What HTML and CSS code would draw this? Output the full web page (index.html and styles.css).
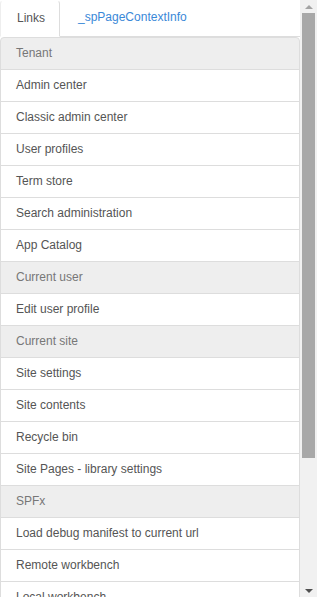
FILE: index.html
```html
<!DOCTYPE html>
<html>
<head>
<meta charset="utf-8">
<link rel="stylesheet" href="styles.css">
</head>
<body>
<div class="frame">
  <div class="panel">
    <div class="tabs">
      <div class="tab active">Links</div>
      <div class="tab link">_spPageContextInfo</div>
    </div>
    <div class="list">
      <div class="item head first">Tenant</div>
      <div class="item">Admin center</div>
      <div class="item">Classic admin center</div>
      <div class="item">User profiles</div>
      <div class="item">Term store</div>
      <div class="item">Search administration</div>
      <div class="item">App Catalog</div>
      <div class="item head">Current user</div>
      <div class="item">Edit user profile</div>
      <div class="item head">Current site</div>
      <div class="item">Site settings</div>
      <div class="item">Site contents</div>
      <div class="item">Recycle bin</div>
      <div class="item">Site Pages - library settings</div>
      <div class="item head">SPFx</div>
      <div class="item">Load debug manifest to current url</div>
      <div class="item">Remote workbench</div>
      <div class="item">Local workbench</div>
    </div>
  </div>
  <div class="scrollbar">
    <div class="arrow up"></div>
    <div class="track"><div class="thumb"></div></div>
    <div class="arrow down"></div>
  </div>
</div>
</body>
</html>
```
FILE: styles.css
```css
html, body {
  margin: 0;
  padding: 0;
  overflow: hidden;
  background: #fff;
}
body {
  font-family: "Liberation Sans", Arial, sans-serif;
  font-size: 12px;
  color: #555;
}
.frame {
  display: flex;
  width: 317px;
  height: 597px;
  overflow: hidden;
}
.panel {
  width: 300px;
  flex: none;
  overflow: hidden;
}
.tabs {
  display: flex;
  height: 37px;
  border-bottom: 1px solid #ddd;
  box-sizing: border-box;
}
.tab {
  padding: 0 16px;
  line-height: 34px;
  height: 37px;
  box-sizing: border-box;
}
.tab.active {
  width: 60px;
  color: #555;
  background: #fff;
  border: 1px solid #ddd;
  border-bottom-color: transparent;
  border-top-color: transparent;
  border-left-color: #eee;
  border-radius: 4px 4px 0 0;
}
.tab.link {
  color: #3a88d8;
  padding-left: 18px;
}
.list {
  display: flex;
  flex-direction: column;
}
.item {
  height: 33px;
  line-height: 30px;
  padding: 0 15px;
  border: 1px solid #ddd;
  margin-bottom: -1px;
  box-sizing: border-box;
  background: #fff;
  color: #555;
  white-space: nowrap;
}
.item.head {
  background: #eee;
  color: #777;
}
.item.first {
  border-radius: 4px 4px 0 0;
  border-top-color: #ddd;
}
.scrollbar {
  width: 17px;
  flex: none;
  height: 597px;
  background: #f1f1f1;
  display: flex;
  flex-direction: column;
}
.arrow {
  height: 13px;
  flex: none;
  display: flex;
  align-items: center;
  justify-content: center;
}
.arrow::before {
  content: "";
  width: 0;
  height: 0;
  border-left: 4px solid transparent;
  border-right: 4px solid transparent;
}
.arrow.up::before {
  border-bottom: 4px solid #a3a3a3;
}
.arrow.down::before {
  border-top: 4px solid #505050;
}
.track {
  flex: 1;
  padding: 0 2px;
}
.thumb {
  height: 445px;
  background: #a8a8a8;
}
```
